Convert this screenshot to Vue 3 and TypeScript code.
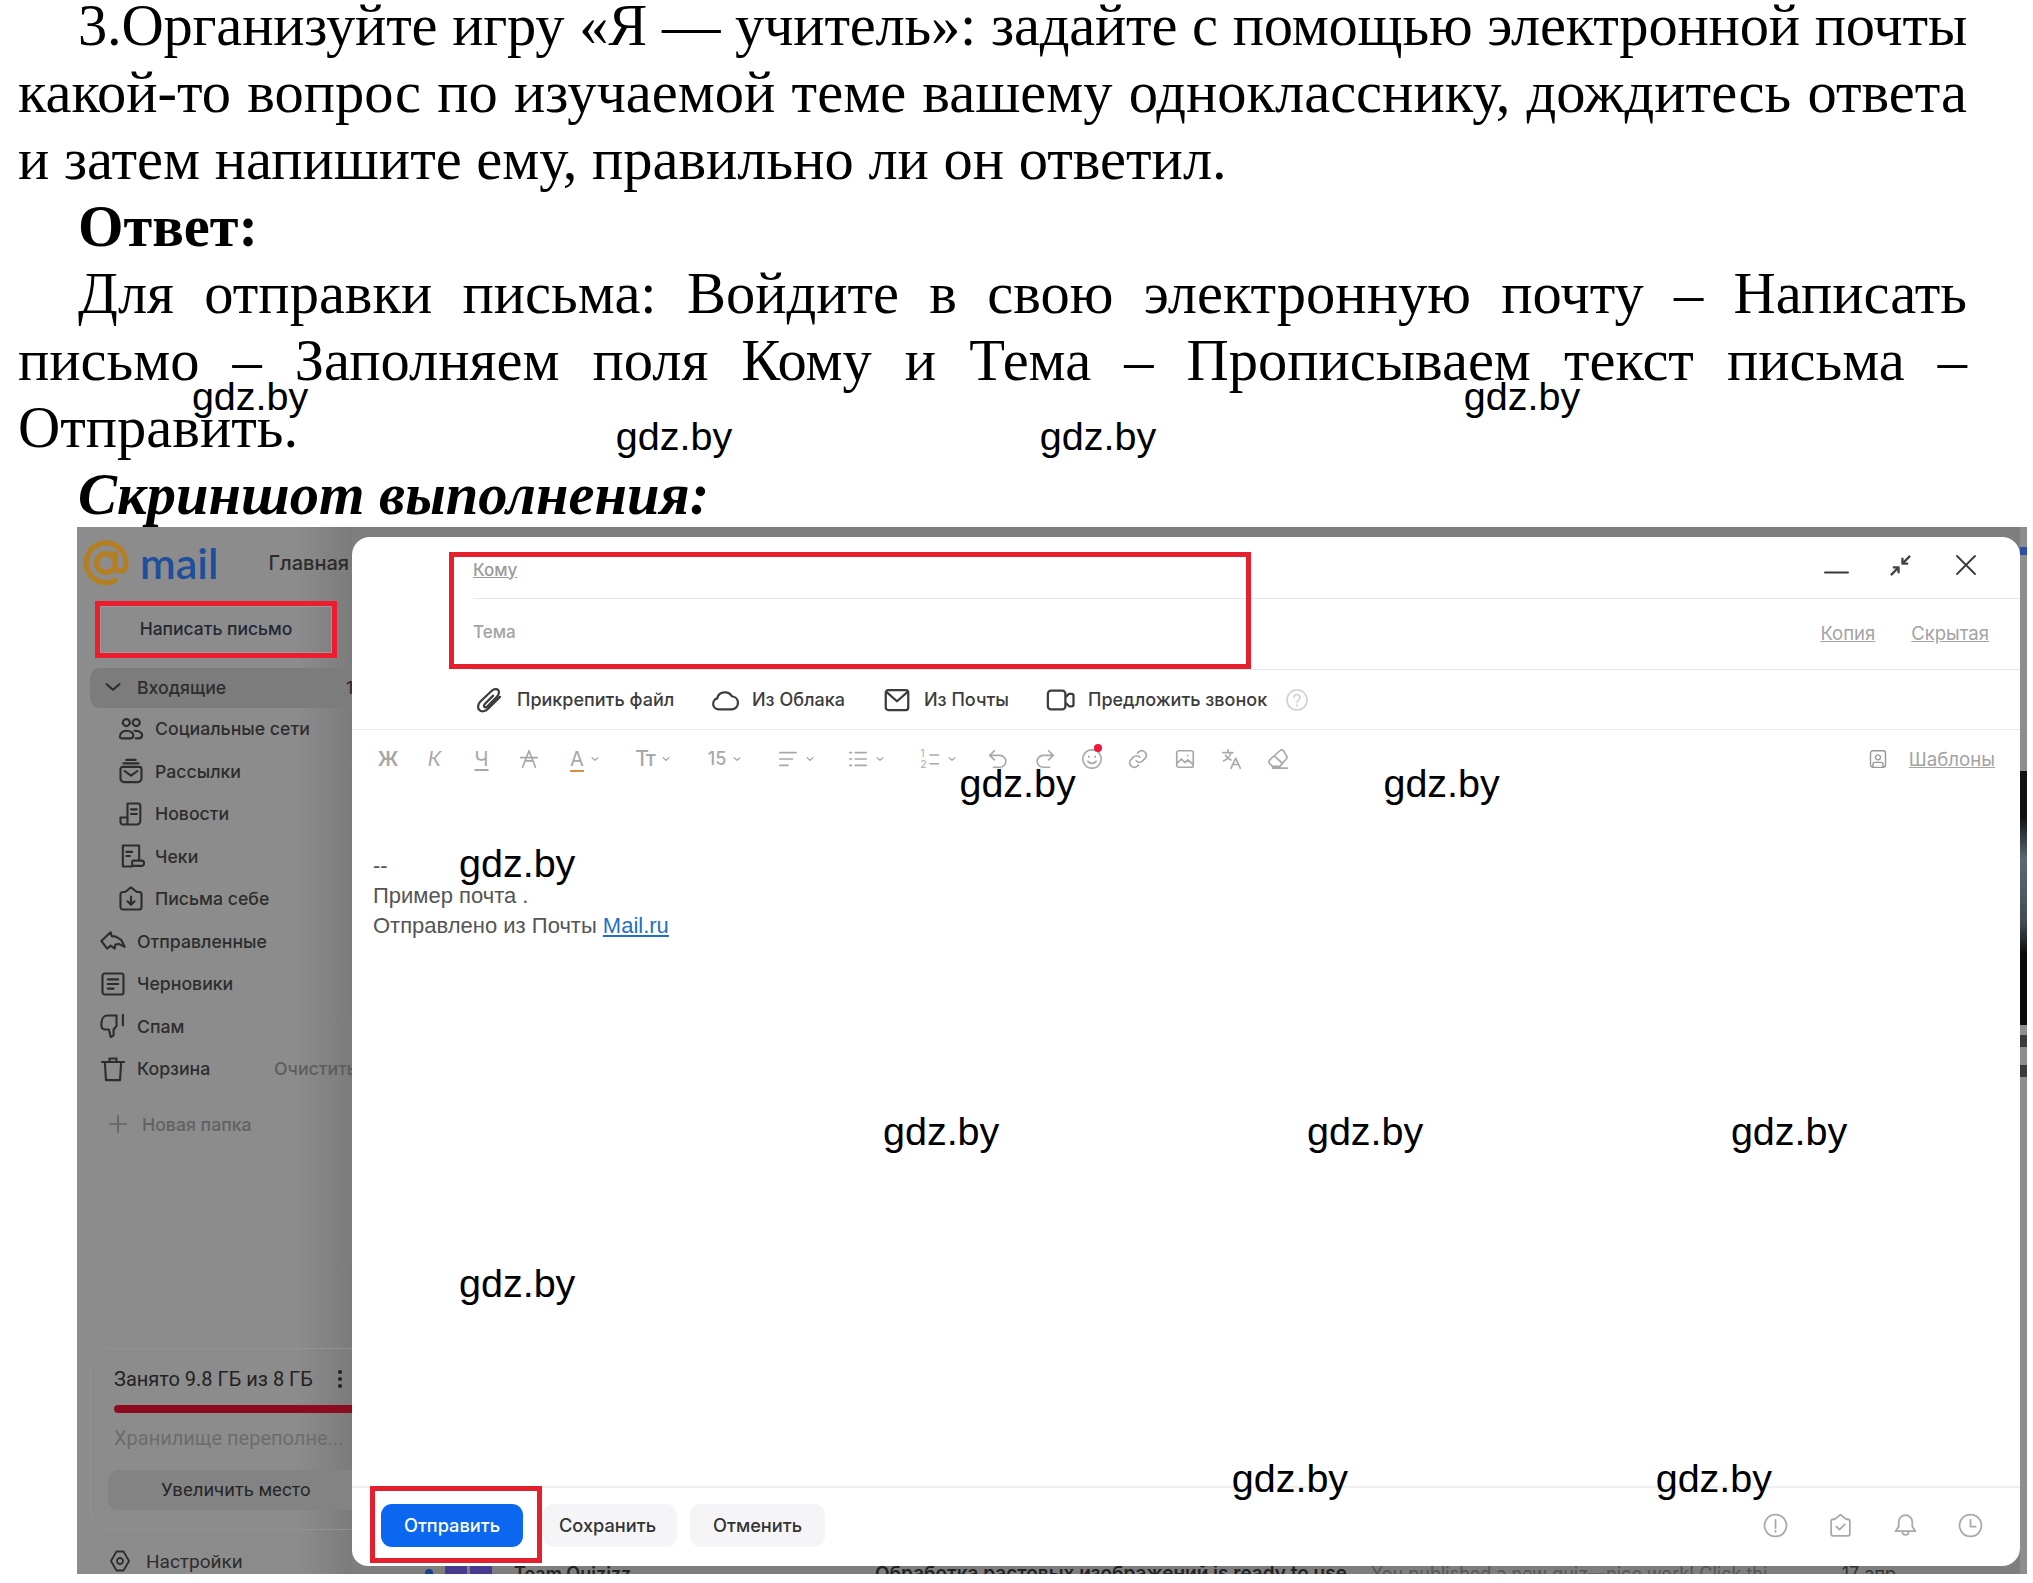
<script setup lang="ts">
const k = 2033 / 1568

const icons: Record<string, string> = {
  users: 'M8 3.500a3 3 0 1 1-.01 0zM16.500 3.500a3 3 0 1 1-.01 0zM2.500 19c-.5-3 2-5.500 5.500-5.500s6 2 6 4-1 2.500-3 2.500H5c-1.500 0-2.300-.2-2.500-1zM15 13.500c4 0 7 1.500 6.500 4.500-.2 1.500-1.500 2-3.500 2h-2',
  news2: 'M8 2.500h8M5.500 5.500h13M5 8.500h14a2 2 0 0 1 2 2v8a3 3 0 0 1-3 3H6a3 3 0 0 1-3-3v-8a2 2 0 0 1 2-2zM6.500 12l5.500 4 5.500-4',
  news: 'M9 3h9a2 2 0 0 1 2 2v13a3 3 0 0 1-3 3H5a2 2 0 0 1-2-2v-4h6V3zM9 14v5a2 2 0 0 1-2 2M12 8h5M12 12h5',
  check: 'M5 3h14v12M5 3v18h8M8 8.500h5M8 12h3M14 16h7a2 2 0 0 1 0 4.500h-7a1 1 0 0 1-1-1v-2.500a1 1 0 0 1 1-1z',
  self: 'M12 2l5 4h2a2 2 0 0 1 2 2v11a2 2 0 0 1-2 2H5a2 2 0 0 1-2-2V8a2 2 0 0 1 2-2h2l5-4zM12 10v7M9 14l3 3 3-3',
  sent: 'M2 12l8-7.500 1 3.500h3l5 3 3 6-5-2.500-3 .5-.5 3.500L10 16 7 18.500 2 12z',
  draft: 'M5 3h14a2 2 0 0 1 2 2v14a2 2 0 0 1-2 2H5a2 2 0 0 1-2-2V5a2 2 0 0 1 2-2zM7.500 8h9M7.500 12h9M7.500 16h5',
  spam: 'M15 3H7C4 3 2 6 2 11c0 3 1 4 3 4h3.500l1.500 6.500 2.500-1.500v-5l2.500-3V3zM20.500 2.500v9',
  trash: 'M2.500 6h19M9 6V3h6v3M5 6l1 15.500h12L19 6',
  plus: 'M12 3v18M3 12h18',
  gear: 'M8.500 2.500h7l5.500 9.500-5.500 9.500h-7L3 12zM12 9a3 3 0 1 1-.01 0z',
  chev: 'M5 9l7 6 7-6',
  clip: 'M20 9.500L10.500 19c-2.500 2.500-5.500 2.500-7 1s-1.500-4.500 1-7L13 5c2-2 4.500-2 5.500-1s1 3.500-1 5.500l-7.500 7.500c-1 1-2 1-2.500.5s-.5-1.500.5-2.500l6.500-6.500',
  cloud: 'M7 19.500a4.500 4.500 0 0 1-1.300-8.800A6.500 6.500 0 0 1 17.500 9a5.300 5.300 0 0 1 .5 10.500H7z',
  mail: 'M5 4h14a2 2 0 0 1 2 2v12a2 2 0 0 1-2 2H5a2 2 0 0 1-2-2V6a2 2 0 0 1 2-2zM3.500 5.500L12 13l8.500-7.500',
  video: 'M4 4.500h9a2.500 2.500 0 0 1 2.500 2.500v10a2.500 2.500 0 0 1-2.500 2.500H4A2.500 2.500 0 0 1 1.500 17V7A2.500 2.500 0 0 1 4 4.500zM15.500 10l3-3h2a1.500 1.500 0 0 1 1.500 1.500v7a1.500 1.500 0 0 1-1.500 1.500h-2l-3-3',
  help: 'M12 2a10 10 0 1 1-.01 0zM9 9.500c0-4 6-4 6 0 0 2.500-3 2.500-3 5M12 17v1',
  min: 'M1 12h22',
  shrink: 'M22 2l-8 8M14 4v6h6M2 22l8-8M10 20v-6H4',
  close: 'M3 3l18 18M21 3L3 21',
  strike: 'M5 21L12 3l7 18M8 14h8M3 10.500h18',
  align: 'M3 5h18M3 12h14M3 19h9',
  list: 'M9 5h12M9 12h12M9 19h12M3 5h2M3 12h2M3 19h2',
  numbered: 'M10 7h11M10 18h11',
  undo: 'M8 3L3 8l5 5M3 8h11a6 6 0 0 1 0 13H7',
  redo: 'M16 3l5 5-5 5M21 8H10a6 6 0 0 0 0 13h7',
  emoji: 'M12 2a10 10 0 1 1-.01 0zM8.500 9v1M15.500 9v1M7.500 14.500c2 3 7 3 9 0',
  link: 'M10 14a5 5 0 0 0 7 0l3-3a5 5 0 0 0-7-7l-1.500 1.500M14 10a5 5 0 0 0-7 0l-3 3a5 5 0 0 0 7 7l1.500-1.500',
  image: 'M5 3h14a2 2 0 0 1 2 2v14a2 2 0 0 1-2 2H5a2 2 0 0 1-2-2V5a2 2 0 0 1 2-2zM3 17l5-5 4 4 3-3 6 5M15 8v.5',
  translate: 'M2 5h11M7.500 2v3M11 5c-1 4-4 7-8 9M5 8c1 2 3 4 6 5M11 22l5-11 5 11M13 18h6',
  eraser: 'M14 3L3 13a3 3 0 0 0 0 4l3 3h8l7-8a3 3 0 0 0 0-4l-3-5a3 3 0 0 0-4 0zM8 8.500l8 7.500M6 22h16',
  contact: 'M6 2h12a3 3 0 0 1 3 3v14a3 3 0 0 1-3 3H6a3 3 0 0 1-3-3V5a3 3 0 0 1 3-3zM12 7a3 3 0 1 1-.01 0zM6 21v-3c0-1.500 1-2 2-2h8c1 0 2 .5 2 2v3',
  alert: 'M12 1.500a10.500 10.500 0 1 1-.01 0zM12 6.500v8M12 17v1',
  shield: 'M12 1.500l5.500 4.500H19a2 2 0 0 1 2 2v12a2 2 0 0 1-2 2H5a2 2 0 0 1-2-2V8a2 2 0 0 1 2-2h1.500L12 1.500zM8 13l3 3 5-5',
  bell: 'M12 2a6.500 6.500 0 0 1 6.500 6.500V13l3 4.500h-19l3-4.500V8.500A6.500 6.500 0 0 1 12 2zM9 18c0 4 6 4 6 0',
  clock: 'M12 1.500a10.500 10.500 0 1 1-.01 0zM12 6.500V13h5',
}

interface NavRow { label: string; icon: string; sub: boolean; count?: string; action?: string }

const navRows: NavRow[] = [
  { label: 'Социальные сети', icon: 'users', sub: true },
  { label: 'Рассылки', icon: 'news2', sub: true, count: '9' },
  { label: 'Новости', icon: 'news', sub: true },
  { label: 'Чеки', icon: 'check', sub: true },
  { label: 'Письма себе', icon: 'self', sub: true },
  { label: 'Отправленные', icon: 'sent', sub: false },
  { label: 'Черновики', icon: 'draft', sub: false },
  { label: 'Спам', icon: 'spam', sub: false },
  { label: 'Корзина', icon: 'trash', sub: false, action: 'Очистить' },
]

const attachments = [
  { label: 'Прикрепить файл', icon: 'clip', width: 235 },
  { label: 'Из Облака', icon: 'cloud', width: 172 },
  { label: 'Из Почты', icon: 'mail', width: 164 },
  { label: 'Предложить звонок', icon: 'video', width: 237 },
]

interface ToolCell { width: number; text?: string; icon?: string; chev?: boolean; cls?: string }

const tools: ToolCell[] = [
  { width: 46, text: 'Ж', cls: 'tb' },
  { width: 47, text: 'К', cls: 'ti' },
  { width: 47, text: 'Ч', cls: 'tu' },
  { width: 47, icon: 'strike' },
  { width: 66, text: 'А', cls: 'tcolor', chev: true },
  { width: 70, text: 'Тт', cls: 'tsize', chev: true },
  { width: 74, text: '15', cls: 'tnum', chev: true },
  { width: 68, icon: 'align', chev: true },
  { width: 72, icon: 'list', chev: true },
  { width: 73, icon: 'numbered', chev: true, cls: 'numbered' },
  { width: 46.7, icon: 'undo' },
  { width: 46.7, icon: 'redo' },
  { width: 46.7, icon: 'emoji', cls: 'dot' },
  { width: 46.7, icon: 'link' },
  { width: 46.7, icon: 'image' },
  { width: 46.7, icon: 'translate' },
  { width: 46.7, icon: 'eraser' },
]

const footerIcons = ['alert', 'shield', 'bell', 'clock']

const marks: [number, number][] = [
  [148, 306], [475, 337], [802, 337], [1129, 306], [740, 605], [1067, 605], [354, 666],
  [681, 873], [1008, 873], [1335, 873], [354, 990], [950, 1141], [1277, 1141],
]
const watermarks = marks.map(([x, y]) => ({ left: `${x * k}px`, top: `${y * k - 24}px` }))
</script>

<template>
  <div class="page">
    <section class="doc">
      <p class="line first tight">3.Организуйте игру «Я — учитель»: задайте с помощью электронной почты</p>
      <p class="line">какой-то вопрос по изучаемой теме вашему однокласснику, дождитесь ответа</p>
      <p class="line plain">и затем напишите ему, правильно ли он ответил.</p>
      <p class="line plain first"><b>Ответ:</b></p>
      <p class="line first">Для отправки письма: Войдите в свою электронную почту – Написать</p>
      <p class="line">письмо – Заполняем поля Кому и Тема – Прописываем текст письма –</p>
      <p class="line plain">Отправить.</p>
      <p class="line plain first"><b><i>Скриншот выполнения:</i></b></p>
    </section>

    <section class="shot">
      <aside class="side">
        <div class="logo">
          <svg class="at" viewBox="0 0 44 44"><path d="M31 38.500A19 19 0 1 1 41 22v2c0 3.500-2 6-5 6s-5-2.500-5-6V13M31 22a9 9 0 1 1-18 0a9 9 0 1 1 18 0" /></svg>
          <span class="wordmark">mail</span>
          <span class="home">Главная</span>
        </div>
        <div class="compose"><span>Написать письмо</span></div>
        <div class="inbox">
          <svg class="chev-big" viewBox="0 0 24 24"><path :d="icons.chev" /></svg>
          <span>Входящие</span>
          <span class="count">1</span>
        </div>
        <div v-for="row in navRows" :key="row.label" class="nav" :class="{ sub: row.sub }">
          <svg class="ic" viewBox="0 0 24 24"><path :d="icons[row.icon]" /></svg>
          <span>{{ row.label }}</span>
          <span v-if="row.count" class="count">{{ row.count }}</span>
          <span v-if="row.action" class="action">{{ row.action }}</span>
        </div>
        <div class="new-folder">
          <svg viewBox="0 0 24 24"><path :d="icons.plus" /></svg>
          <span>Новая папка</span>
        </div>
        <div class="storage">
          <div class="st-title"><span>Занято 9.8 ГБ из 8 ГБ</span><i class="dots" /></div>
          <div class="st-bar" />
          <div class="st-desc">Хранилище переполне...</div>
          <div class="st-btn"><span>Увеличить место</span></div>
        </div>
        <div class="settings">
          <svg viewBox="0 0 24 24"><path :d="icons.gear" /></svg>
          <span>Настройки</span>
        </div>
      </aside>

      <div class="main">
        <div class="mail-row">
          <i class="unread" /><i class="ava" /><i class="ava" />
          <span class="from">Team Quizizz</span>
          <b class="subject">Обработка растовых изображений is ready to use</b>
          <span class="snippet">You published a new quiz—nice work! Click thi</span>
          <span class="date">17 апр</span>
        </div>
        <div class="rail">
          <i class="rail-blue" />
          <i class="rail-dark" />
          <i class="rail-mark" />
          <i class="rail-mark" />
        </div>
      </div>

      <div class="modal">
        <div class="field to">
          <span class="label-link">Кому</span>
          <div class="win">
            <svg class="w-min" viewBox="0 0 24 24"><path :d="icons.min" /></svg>
            <svg class="w-shrink" viewBox="0 0 24 24"><path :d="icons.shrink" /></svg>
            <svg class="w-close" viewBox="0 0 24 24"><path :d="icons.close" /></svg>
          </div>
        </div>
        <div class="field subject-field">
          <span class="label">Тема</span>
          <div class="cc"><span>Копия</span><span>Скрытая</span></div>
        </div>
        <div class="attach">
          <div v-for="a in attachments" :key="a.label" class="att" :style="{ width: a.width + 'px' }">
            <svg viewBox="0 0 24 24"><path :d="icons[a.icon]" /></svg>
            <span>{{ a.label }}</span>
          </div>
          <svg class="att-help" viewBox="0 0 24 24"><path :d="icons.help" /></svg>
        </div>
        <div class="tools">
          <div v-for="(t, i) in tools" :key="i" class="cell" :class="t.cls" :style="{ width: t.width + 'px' }">
            <span v-if="t.text" class="glyph">{{ t.text }}</span>
            <span v-if="t.cls === 'numbered'" class="nums"><span>1</span><span>2</span></span>
            <svg v-if="t.icon" class="tool-ic" viewBox="0 0 24 24"><path :d="icons[t.icon]" /></svg>
            <svg v-if="t.chev" class="tool-chev" viewBox="0 0 24 24"><path :d="icons.chev" /></svg>
          </div>
          <div class="tpl">
            <svg viewBox="0 0 24 24"><path :d="icons.contact" /></svg>
            <span>Шаблоны</span>
          </div>
        </div>
        <div class="body">
          <div>--</div>
          <div>Пример почта .</div>
          <div>Отправлено из Почты <a class="link">Mail.ru</a></div>
        </div>
        <div class="foot">
          <div class="btn send">Отправить</div>
          <div class="btn save">Сохранить</div>
          <div class="btn cancel">Отменить</div>
          <div class="foot-ics">
            <svg v-for="f in footerIcons" :key="f" viewBox="0 0 24 24"><path :d="icons[f]" /></svg>
          </div>
        </div>
        <div class="mark-fields" />
        <div class="mark-send" />
      </div>
    </section>

    <div class="marks">
      <span v-for="(w, i) in watermarks" :key="i" class="mark" :style="w">gdz.by</span>
    </div>
  </div>
</template>

<style>
html, body { margin: 0; background: #fff; }
</style>

<style scoped>
.page {
  position: relative;
  width: 2033px;
  height: 1583px;
  overflow: hidden;
  background: #fff;
  color: #000;
}
p { margin: 0; }
svg { fill: none; stroke: currentColor; stroke-linecap: round; stroke-linejoin: round; flex: none; }

.doc {
  margin: -8px 66px 0 18px;
  height: 535px;
  font: 58.500px/67px "Liberation Serif", serif;
}
.line { text-align: justify; text-align-last: justify; white-space: nowrap; }
.line.plain { text-align-last: left; }
.line.first { text-indent: 60px; }
.line.tight { letter-spacing: -0.2px; }

.shot {
  position: relative;
  display: flex;
  width: 1950px;
  height: 1047px;
  margin-left: 77px;
  overflow: hidden;
  font-family: Inter, "Liberation Sans", sans-serif;
  background: #7e7e7e;
}

.side {
  display: flex;
  flex-direction: column;
  flex: none;
  width: 275px;
  box-sizing: border-box;
  padding-left: 13px;
  overflow: hidden;
  color: #2d2d2d;
  font-size: 17.700px;
  font-weight: 500;
  background: linear-gradient(90deg, #8c8c8c 0 80%, #7b7b7b 100%);
}
.logo { display: flex; align-items: center; height: 46px; margin: 13px 0 15px -7px; white-space: nowrap; }
.at { width: 46px; height: 46px; stroke: #b47e22; stroke-width: 5; }
.wordmark { margin-left: 11px; font: 600 43px/44px Lato, "Noto Sans", sans-serif; color: #1d4f9c; }
.home { margin-left: 50px; font-size: 20px; color: #2b2b2b; }

.compose {
  display: flex;
  align-items: center;
  justify-content: center;
  box-sizing: border-box;
  width: 242px;
  height: 57px;
  margin: 0 0 10px 5px;
  border: 5px solid #ed1c2e;
  box-shadow: inset 0 0 0 1px #9a9a9a;
  padding-bottom: 2px;
  font-size: 17.500px;
  color: #232833;
}
.inbox {
  display: flex;
  align-items: center;
  gap: 12px;
  box-sizing: border-box;
  height: 40px;
  margin-right: -20px;
  margin-bottom: -0.5px;
  padding: 0 0 2px 12px;
  border-radius: 10px 0 0 10px;
  background: #7c7c7c;
  white-space: nowrap;
}
.ic { width: 28px; height: 28px; stroke-width: 1.800; }
.chev-big { width: 22px; height: 22px; stroke-width: 2.400; margin-right: 1px; }
.count { position: absolute; left: 269px; }
.nav {
  position: relative;
  display: flex;
  align-items: center;
  gap: 10px;
  height: 42.500px;
  padding-left: 9px;
  white-space: nowrap;
}
.nav.sub { padding-left: 27px; }
.nav .count { left: 263px; }
.action { position: absolute; left: 184px; color: #5c5c5c; }
.new-folder {
  display: flex;
  align-items: center;
  gap: 13px;
  height: 42px;
  margin-top: 13px;
  padding-left: 17px;
  color: #626262;
}
.new-folder svg { width: 22px; height: 22px; stroke-width: 1.800; }

.storage {
  box-sizing: border-box;
  height: 182px;
  width: 280px;
  margin-top: auto;
  padding: 19px 0 0 24px;
  border-radius: 18px;
  box-shadow: inset 0 0 0 1px #929292;
  font-family: Roboto, "Liberation Sans", sans-serif;
  font-weight: 400;
  font-size: 20px;
  color: #222;
  white-space: nowrap;
}
.st-title { display: flex; align-items: center; height: 24px; }
.dots {
  width: 4px;
  height: 4px;
  margin-left: 25px;
  border-radius: 50%;
  background: #222;
  box-shadow: 0 -7px 0 #222, 0 7px 0 #222;
}
.st-bar { height: 8px; margin-top: 14px; border-radius: 4px 0 0 4px; background: #8d0b1f; }
.st-desc { height: 24px; margin-top: 13px; line-height: 24px; color: #6c6c6c; }
.st-btn {
  display: flex;
  align-items: center;
  height: 40px;
  margin: 20px 0 0 -6px;
  padding-left: 53px;
  border-radius: 10px;
  background: #838383;
  font-size: 18.500px;
  color: #262626;
}
.settings {
  display: flex;
  align-items: center;
  gap: 14px;
  height: 26px;
  margin-top: 18px;
  padding-left: 18px;
  font-family: Roboto, "Liberation Sans", sans-serif;
  font-weight: 400;
  font-size: 19px;
}
.settings svg { width: 24px; height: 24px; stroke-width: 1.800; }

.main {
  position: relative;
  flex: 1;
  min-width: 0;
  display: flex;
  align-items: flex-end;
  overflow: hidden;
}
.mail-row {
  display: flex;
  align-items: center;
  flex: 1;
  height: 24px;
  margin-bottom: -11px;
  padding-left: 73px;
  font-size: 18px;
  color: #222;
  white-space: nowrap;
}
.unread { width: 8px; height: 8px; border-radius: 50%; background: #1a3f8f; margin-right: 12px; }
.ava { width: 22px; height: 22px; background: #463b8e; margin-right: 3px; }
.from { margin-left: 19px; font-weight: 600; width: 361px; }
.subject { font-weight: 600; font-size: 19px; }
.snippet { margin-left: 24px; color: #555; }
.date { position: absolute; right: 131px; color: #333; }
.rail {
  position: absolute;
  top: 0;
  right: 0;
  bottom: 0;
  display: flex;
  flex-direction: column;
  width: 7px;
  padding-top: 20px;
  background: #8e8e91;
}
.rail-blue { display: block; height: 8px; background: #2950a8; margin-bottom: 216px; }
.rail-dark {
  display: block;
  height: 254px;
  margin-bottom: 10px;
  background: linear-gradient(#111 0 18%, #5c6a75 35%, #3f4a53 60%, #0b0b0b 72%, #0b0b0b 100%);
}
.rail-mark { display: block; height: 12px; background: #3b3b3b; margin-bottom: 18px; }

.modal {
  position: absolute;
  top: 10px;
  left: 275px;
  right: 7px;
  bottom: 8px;
  display: flex;
  flex-direction: column;
  background: #fff;
  border-radius: 18px 18px 18px 16px;
}
.field {
  position: relative;
  display: flex;
  align-items: center;
  box-sizing: border-box;
  border-bottom: 1px solid #e6e6e8;
}
.to { height: 62px; margin-left: 121px; padding-top: 4px; }
.subject-field { height: 71px; margin-left: 121px; padding-bottom: 5px; }
.label-link { font-size: 17px; font-weight: 500; color: #9a9a9a; text-decoration: underline; }
.label { font-size: 17px; font-weight: 500; color: #a2a2a2; }
.win { position: absolute; top: 0; left: 0; right: 0; }
.w-min { position: absolute; left: 1351px; top: 23px; width: 25px; height: 25px; stroke: #3a3a3a; stroke-width: 2; }
.w-shrink { position: absolute; left: 1416px; top: 17px; width: 23px; height: 23px; stroke: #444; stroke-width: 2.400; stroke-linecap: butt; }
.w-close { position: absolute; left: 1481px; top: 16px; width: 24px; height: 24px; stroke: #3d3d3d; stroke-width: 1.900; }
.cc { display: flex; gap: 36px; margin-left: auto; margin-right: 31px; padding-top: 3px; font-size: 18.500px; color: #a3a3a3; text-decoration: underline; }

.attach {
  display: flex;
  align-items: center;
  height: 60px;
  padding-left: 125px;
  box-sizing: border-box;
  border-bottom: 1px solid #e9e9eb;
  color: #3c3c3c;
  font-size: 18px;
  font-weight: 500;
}
.att { display: flex; align-items: center; gap: 12px; flex: none; white-space: nowrap; }
.att svg { width: 30px; height: 30px; margin-left: -2px; stroke-width: 1.800; }
.att-help { width: 24px; height: 24px; stroke: #cfcfcf; stroke-width: 1.600; margin-left: 0; }

.tools {
  display: flex;
  align-items: center;
  height: 58px;
  padding-left: 13px;
  color: #a8a8a8;
  flex: none;
}
.cell {
  position: relative;
  display: flex;
  align-items: center;
  justify-content: center;
  gap: 6px;
  flex: none;
}
.glyph { font: 500 20px/24px Inter, "Liberation Sans", sans-serif; }
.tb .glyph { font-weight: 600; }
.ti .glyph { font-style: italic; font-weight: 400; }
.tu .glyph { font-weight: 400; text-decoration: underline; text-underline-offset: 3px; }
.tcolor .glyph { font-weight: 400; text-decoration: underline #d98c45 2px; text-underline-offset: 4px; }
.tsize .glyph { font-size: 21px; letter-spacing: -1px; }
.tnum .glyph { font-size: 18px; }
.tool-ic { width: 22px; height: 22px; stroke-width: 1.800; }
.tool-chev { width: 10px; height: 10px; stroke-width: 3; }
.numbered .tool-ic { width: 19px; margin-left: -5px; }
.nums { display: flex; flex-direction: column; font-size: 10px; line-height: 11px; margin-right: -6px; }
.dot::after {
  content: "";
  position: absolute;
  top: -4px;
  left: 26px;
  width: 8px;
  height: 8px;
  border-radius: 50%;
  background: #f0173f;
}
.tpl { display: flex; align-items: center; gap: 21px; margin-left: auto; margin-right: 25px; font-size: 18.700px; color: #a3a3a3; text-decoration: underline; }
.tpl svg { width: 20px; height: 20px; stroke-width: 1.700; color: #999; }

.body {
  flex: 1;
  padding: 63px 0 0 21px;
  font: 22px/30px "Liberation Sans", sans-serif;
  color: #555;
}
.link { color: #1f6fc4; text-decoration: underline; }

.foot {
  display: flex;
  align-items: center;
  flex: none;
  height: 80px;
  box-sizing: border-box;
  padding: 0 0 4px 29px;
  border-top: 2px solid #efefef;
}
.btn {
  display: flex;
  align-items: center;
  justify-content: center;
  height: 43px;
  border-radius: 11px;
  font-size: 18.200px;
  font-weight: 500;
  flex: none;
}
.send { width: 142px; background: #0b66f0; color: #fff; }
.save { box-sizing: border-box; width: 134px; margin-left: 20px; padding-right: 5px; background: #f5f5f7; color: #333; }
.cancel { width: 135px; margin-left: 13px; background: #f5f5f7; color: #333; }
.foot-ics { display: flex; gap: 40px; margin-left: auto; margin-right: 37px; color: #a9a9a9; }
.foot-ics svg { width: 25px; height: 25px; stroke-width: 1.700; }

.mark-fields {
  position: absolute;
  top: 15px;
  left: 97px;
  box-sizing: border-box;
  width: 802px;
  height: 117px;
  border: 5px solid #e51f2e;
}
.mark-send {
  position: absolute;
  left: 18px;
  bottom: 3px;
  box-sizing: border-box;
  width: 172px;
  height: 77px;
  border: 5px solid #e51f2e;
}

.marks { position: absolute; inset: 0; pointer-events: none; }
.mark {
  position: absolute;
  font: 39.500px/46px "Liberation Sans", sans-serif;
  color: #000;
}
</style>
